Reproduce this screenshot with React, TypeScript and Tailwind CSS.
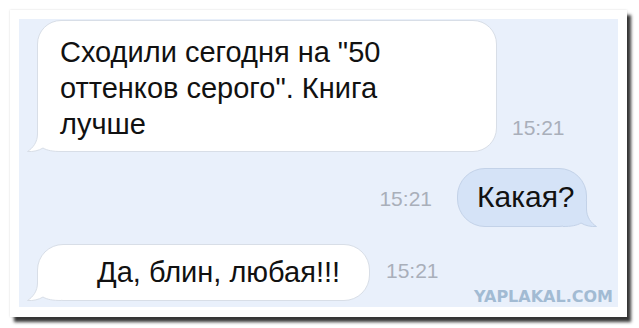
const Tail = ({ fill, stroke, right }: { fill: string; stroke: string; right?: boolean }) => (
  <svg
    width="34"
    height="26"
    viewBox="0 0 34 26"
    className={
      right
        ? "absolute right-[-11px] bottom-[-1px] -scale-x-100"
        : "absolute left-[-11px] bottom-[-1px]"
    }
  >
    <path
      d="M10.5 0 L10.5 8 C10.5 16 6 22 0.5 25.5 C6 26 12 24.5 16 22 C20 24.5 26 25.5 34 25.5 L34 0 Z"
      fill={fill}
    />
    <path
      d="M10.5 0 L10.5 8 C10.5 16 6 22 0.5 25.5 C6 26 12 24.5 16 22 C20 24.5 26 25.5 34 25.5"
      fill="none"
      stroke={stroke}
      strokeWidth="1"
    />
  </svg>
);

const Time = ({ className }: { className?: string }) => (
  <span className={"text-[21px] leading-[24px] text-[#a9afba] " + (className ?? "")}>15:21</span>
);

export default function App() {
  return (
    <div className="w-[639px] h-[328px] bg-white pl-[10px] pt-[10px] font-['Liberation_Sans',Arial,sans-serif]">
      <div className="w-[617px] h-[307px] bg-white p-[9px] shadow-[4px_5px_3px_rgba(20,20,20,0.85),0_0_2px_rgba(0,0,0,0.15)]">
        <div className="relative w-[599px] h-[288px] bg-[#e9f0fb] flex flex-col">
          {/* message 1 */}
          <div className="flex items-end pl-[18px] pt-[1px]">
            <div className="relative w-[460px] h-[132px] rounded-[24px] bg-white border border-[#d8dee7] pl-[22px] pt-[13px] text-[29px] leading-[36px] text-[#111]">
              <Tail fill="#ffffff" stroke="#d8dee7" />
              <p className="relative z-10">
                Сходили сегодня на "50
                <br />
                оттенков серого". Книга
                <br />
                лучше
              </p>
            </div>
            <Time className="ml-[15px] mb-[12px]" />
          </div>

          {/* message 2 */}
          <div className="flex items-center justify-end pr-[31px] mt-[16px]">
            <Time className="mr-[25px] mt-[3px]" />
            <div className="relative w-[130px] h-[59px] rounded-[28px] bg-[#d5e3f7] border border-[#c3d2e8] pl-[19px] pt-[10px] text-[30px] leading-[36px] text-[#111] whitespace-nowrap">
              <Tail fill="#d5e3f7" stroke="#c3d2e8" right />
              <p className="relative z-10">Какая?</p>
            </div>
          </div>

          {/* message 3 */}
          <div className="flex items-center pl-[18px] mt-[17px]">
            <div className="relative w-[333px] h-[57px] rounded-[26px] bg-white border border-[#d8dee7] pl-[59px] pt-[9px] text-[29px] leading-[36px] text-[#111]">
              <Tail fill="#ffffff" stroke="#d8dee7" />
              <p className="relative z-10">Да, блин, любая!!!</p>
            </div>
            <Time className="ml-[16px] -mt-[3px]" />
          </div>

          <span className="absolute right-[5px] bottom-[2px] font-['DejaVu_Sans',sans-serif] font-bold text-[16px] leading-[16px] text-[#a2bbd3]">
            YAPLAKAL.COM
          </span>
        </div>
      </div>
    </div>
  );
}
